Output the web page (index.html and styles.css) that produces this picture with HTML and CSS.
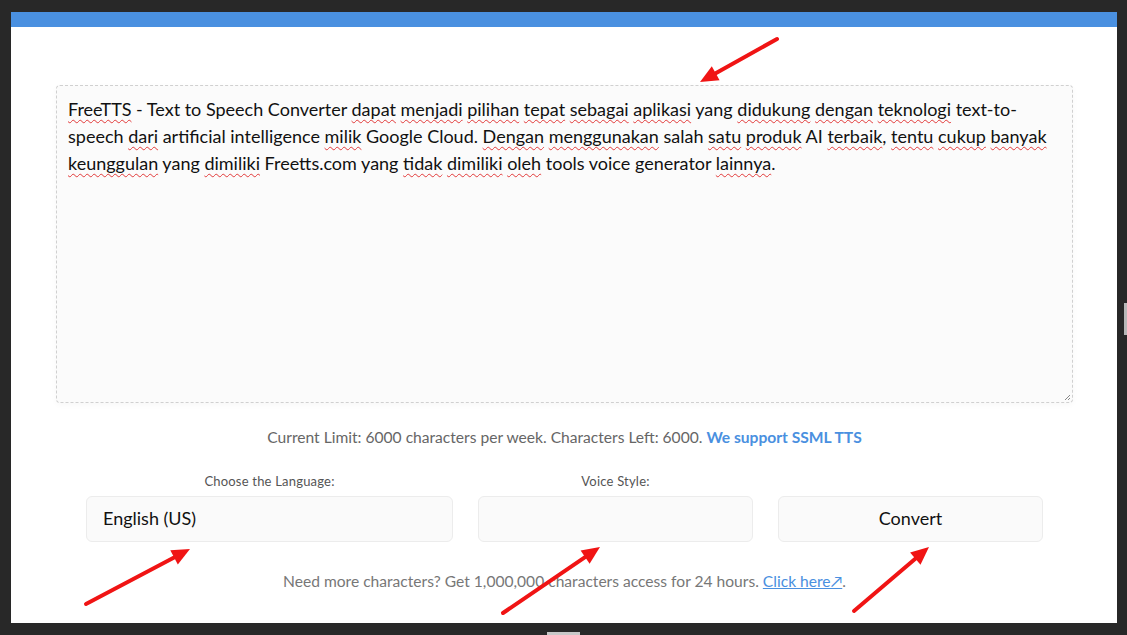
FILE: index.html
```html
<!DOCTYPE html>
<html lang="id">
<head>
<meta charset="utf-8">
<title>FreeTTS</title>
<link rel="stylesheet" href="styles.css">
</head>
<body>
<div class="frame">
  <div class="topbar"></div>
  <main class="main">
    <div class="editor">
      <p class="editor-text"><span class="sp">FreeTTS</span> - Text to Speech Converter <span class="sp">dapat</span> <span class="sp">menjadi</span> <span class="sp">pilihan</span> <span class="sp">tepat</span> <span class="sp">sebagai</span> <span class="sp">aplikasi</span> yang <span class="sp">didukung</span> <span class="sp">dengan</span> <span class="sp">teknologi</span> text-to-<br>speech <span class="sp">dari</span> artificial intelligence <span class="sp">milik</span> Google Cloud. <span class="sp">Dengan</span> <span class="sp">menggunakan</span> salah <span class="sp">satu</span> <span class="sp">produk</span> AI <span class="sp">terbaik</span>, <span class="sp">tentu</span> <span class="sp">cukup</span> <span class="sp">banyak</span><br><span class="sp">keunggulan</span> yang <span class="sp">dimiliki</span> Freetts.com yang <span class="sp">tidak</span> <span class="sp">dimiliki</span> <span class="sp">oleh</span> tools voice generator <span class="sp">lainnya</span>.</p>
      <svg class="grip" width="7" height="7" viewBox="0 0 7 7"><path d="M6 1 L1 6 M6 4 L4 6" stroke="#888" stroke-width="1"/></svg>
    </div>
    <p class="limit">Current Limit: 6000 characters per week. Characters Left: 6000. <a class="ssml" href="#">We support SSML TTS</a></p>
    <div class="controls">
      <label class="ctl-label">Choose the Language:</label>
      <label class="ctl-label">Voice Style:</label>
      <span></span>
      <div class="select">English (US)</div>
      <div class="select"></div>
      <button class="convert">Convert</button>
    </div>
    <p class="more">Need more characters? Get 1,000,000 characters access for 24 hours. <a class="more-link" href="#">Click here↗</a>.</p>
  </main>
</div>
<div class="scroll-thumb"></div>
<div class="bottom-tab"></div>
<svg class="arrows" width="1127" height="635" viewBox="0 0 1127 635">
  <g stroke="#f01414" stroke-width="4" stroke-linecap="round" fill="#f01414">
    <line x1="777" y1="39" x2="715.7" y2="73.2"/>
    <polygon stroke="none" points="700,82 711.8,66.2 719.6,80.2"/>
    <line x1="86" y1="604" x2="174.1" y2="557.4"/>
    <polygon stroke="none" points="190,549 177.8,564.5 170.3,550.3"/>
    <line x1="503" y1="613" x2="585.1" y2="557.1"/>
    <polygon stroke="none" points="600,547 589.6,563.7 580.6,550.5"/>
    <line x1="854" y1="611" x2="915.3" y2="558.7"/>
    <polygon stroke="none" points="929,547 920.5,564.8 910.1,552.6"/>
  </g>
</svg>
</body>
</html>
```

FILE: styles.css
```css
html, body {
  margin: 0;
  padding: 0;
}
body {
  background: #282828;
  width: 1127px;
  height: 635px;
  overflow: hidden;
  position: relative;
  font-family: "Lato", "Noto Sans", sans-serif;
}
.frame {
  margin: 12px 0 0 11px;
  width: 1106px;
  height: 611px;
  background: #ffffff;
}
.topbar {
  height: 15px;
  background: #4a90e0;
}
.main {
  padding: 58px 44px 0 45px;
}
.editor {
  position: relative;
  box-sizing: border-box;
  height: 318px;
  border: 1px dashed #d0d0d0;
  border-radius: 4px;
  background: #fbfbfb;
  padding: 10px 11px;
  box-shadow: 0 2px 6px rgba(0,0,0,0.03);
}
.editor-text {
  margin: 0;
  font-size: 18px;
  line-height: 27px;
  color: #111;
  white-space: nowrap;
}
.sp {
  text-decoration: underline wavy #e23a3a;
  text-decoration-thickness: 1px;
  text-underline-offset: 3px;
}
.grip {
  position: absolute;
  right: 1px;
  bottom: 1px;
}
.limit {
  margin: 24px 0 0;
  text-align: center;
  font-size: 15.6px;
  line-height: 20px;
  color: #666;
}
.ssml {
  color: #4a90e0;
  font-weight: bold;
  text-decoration: none;
}
.controls {
  display: grid;
  grid-template-columns: 367px 275px 265px;
  column-gap: 25px;
  row-gap: 7px;
  width: 957px;
  margin: 26px auto 0;
}
.ctl-label {
  text-align: center;
  font-size: 13px;
  letter-spacing: 0.2px;
  line-height: 16px;
  color: #555;
}
.select, .convert {
  box-sizing: border-box;
  height: 46px;
  border: 1px solid #ececec;
  border-radius: 6px;
  background: #fafafa;
  font-family: inherit;
  font-size: 18px;
  color: #111;
  padding-bottom: 3px;
}
.select {
  display: flex;
  align-items: center;
  padding-left: 16px;
  padding-right: 16px;
}
.convert {
  text-align: center;
  cursor: pointer;
}
.more {
  margin: 29px 0 0;
  text-align: center;
  font-size: 15.6px;
  line-height: 20px;
  color: #777;
}
.more-link {
  color: #4a90e0;
  text-decoration: underline;
}
.scroll-thumb {
  position: absolute;
  left: 1124px;
  top: 303px;
  width: 3px;
  height: 32px;
  background: #b8b8b8;
}
.bottom-tab {
  position: absolute;
  left: 547px;
  top: 632px;
  width: 33px;
  height: 3px;
  background: #c8c8c8;
}
.arrows {
  position: absolute;
  left: 0;
  top: 0;
  pointer-events: none;
}
```
